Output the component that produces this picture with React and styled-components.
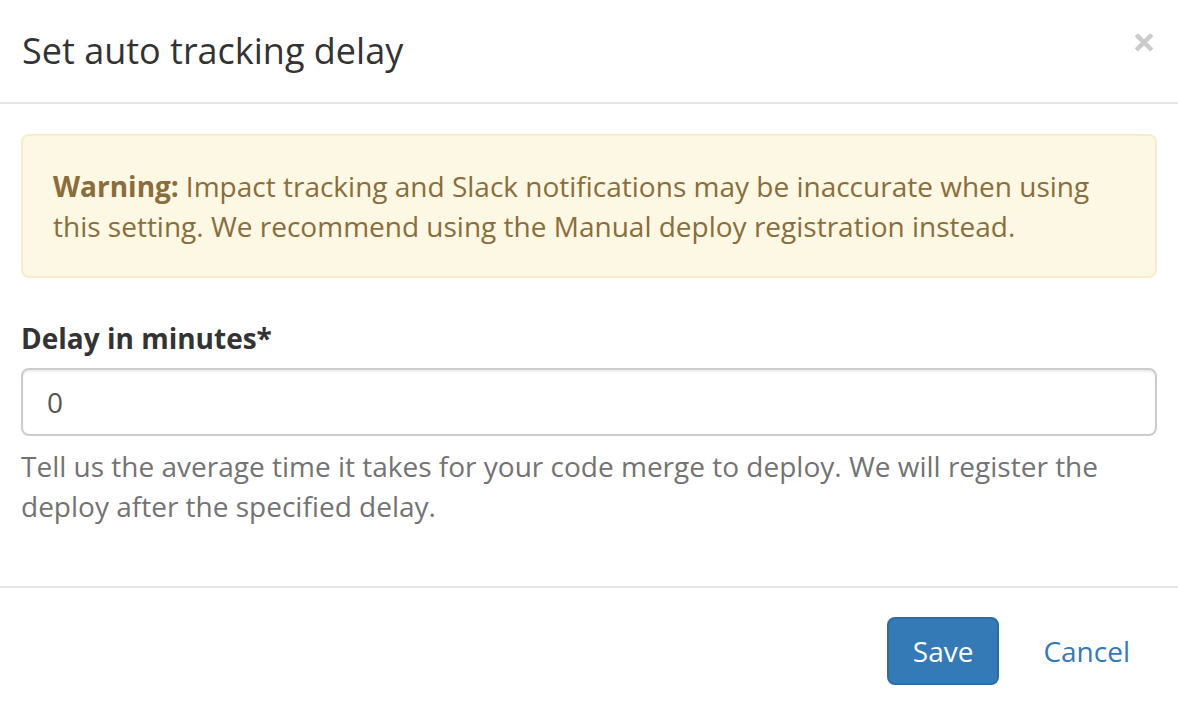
import React from 'react';
import styled, { createGlobalStyle } from 'styled-components';

const GlobalStyle = createGlobalStyle`
  html, body {
    margin: 0;
    padding: 0;
    background: #fff;
  }
  body {
    font-family: "Open Sans", "Liberation Sans", sans-serif;
    font-size: 28px;
    line-height: 40px;
    color: #333;
  }
  * {
    box-sizing: border-box;
  }
`;

const Modal = styled.div`
  width: 1178px;
  background: #fff;
`;

const Header = styled.div`
  display: flex;
  align-items: center;
  justify-content: space-between;
  padding: 31px 22px 31px 22px;
  border-bottom: 2px solid #e5e5e5;
`;

const Title = styled.h4`
  margin: 0;
  font-size: 36px;
  font-weight: 400;
  line-height: 40px;
  color: #333;
`;

const Close = styled.button`
  align-self: flex-start;
  margin-top: -10px;
  padding: 0;
  border: 0;
  background: transparent;
  font-family: "Open Sans", "Liberation Sans", sans-serif;
  font-size: 42px;
  font-weight: 700;
  line-height: 40px;
  color: #000;
  opacity: 0.2;
  cursor: pointer;
`;

const Body = styled.div`
  padding: 30px 21px 30px 21px;
`;

const Alert = styled.div`
  padding: 30px 30px;
  margin-bottom: 40px;
  border: 2px solid #faebcc;
  border-radius: 8px;
  background: #fcf8e3;
  color: #8a6d3b;
`;

const Strong = styled.strong`
  font-weight: 700;
  margin-right: 0.25em;
`;

const FormGroup = styled.div`
  margin-bottom: 30px;
`;

const Label = styled.label`
  display: block;
  margin-bottom: 10px;
  font-weight: 700;
  color: #333;
`;

const Input = styled.input`
  display: block;
  width: 100%;
  height: 68px;
  padding: 12px 24px;
  border: 2px solid #ccc;
  border-radius: 8px;
  font-family: inherit;
  font-size: 28px;
  line-height: 40px;
  color: #555;
  background: #fff;
  box-shadow: inset 0 2px 2px rgba(0, 0, 0, 0.075);
  outline: none;
`;

const Help = styled.p`
  margin: 10px 0 0;
  color: #737373;
`;

const Footer = styled.div`
  display: flex;
  justify-content: flex-end;
  align-items: center;
  gap: 18px;
  padding: 29px 22px 31px;
  border-top: 2px solid #e5e5e5;
`;

const Button = styled.button`
  padding: 12px 24px;
  border: 2px solid ${({ $primary }) => ($primary ? '#2e6da4' : 'transparent')};
  border-radius: 8px;
  background: ${({ $primary }) => ($primary ? '#337ab7' : 'transparent')};
  color: ${({ $primary }) => ($primary ? '#fff' : '#337ab7')};
  font-family: inherit;
  font-size: 28px;
  line-height: 40px;
  cursor: pointer;
`;

export default function App() {
  return (
    <>
      <GlobalStyle />
      <Modal>
        <Header>
          <Title>Set auto tracking delay</Title>
          <Close aria-label="Close">×</Close>
        </Header>
        <Body>
          <Alert>
            <Strong>Warning:</Strong>Impact tracking and Slack notifications may be inaccurate when using
            this setting. We recommend using the Manual deploy registration instead.
          </Alert>
          <FormGroup>
            <Label htmlFor="delay">Delay in minutes*</Label>
            <Input id="delay" type="text" defaultValue="0" />
            <Help>
              Tell us the average time it takes for your code merge to deploy. We will register the
              deploy after the specified delay.
            </Help>
          </FormGroup>
        </Body>
        <Footer>
          <Button $primary>Save</Button>
          <Button>Cancel</Button>
        </Footer>
      </Modal>
    </>
  );
}
